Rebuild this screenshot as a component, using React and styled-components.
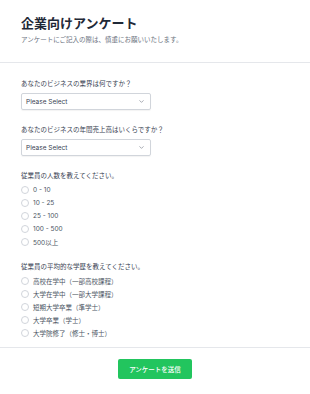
import React from "react";
import styled, { createGlobalStyle } from "styled-components";
import { ChevronDown } from "lucide-react";

const GlobalStyle = createGlobalStyle`
  body {
    margin: 0;
    background: #ffffff;
    font-family: "Inter", "Noto Sans CJK JP", sans-serif;
    color: #374151;
  }
`;

const Page = styled.div`
  width: 310px;
  min-height: 394px;
  background: #ffffff;
`;

const Header = styled.header`
  padding: 15px 21px 17px;
  border-bottom: 1px solid #e5e7eb;
`;

const Title = styled.h1`
  margin: 0;
  font-size: 13px;
  line-height: 16px;
  font-weight: 700;
  color: #1f2937;
`;

const Subtitle = styled.p`
  margin: 4px 0 0;
  font-size: 6.5px;
  line-height: 10px;
  color: #6b7280;
`;

const Form = styled.div`
  padding: 16px 21px 9px;
  display: flex;
  flex-direction: column;
  gap: 15px;
  border-bottom: 1px solid #e5e7eb;
`;

const Question = styled.div`
  display: flex;
  flex-direction: column;
  gap: 4px;
`;

const Label = styled.div`
  font-size: 6.5px;
  line-height: 10px;
  color: #374151;
`;

const SelectBox = styled.div`
  width: 130px;
  height: 17px;
  box-sizing: border-box;
  border: 1px solid #d1d5db;
  border-radius: 2px;
  box-shadow: 0 1px 1px rgba(0, 0, 0, 0.05);
  display: flex;
  align-items: center;
  justify-content: space-between;
  padding: 0 5px 0 4px;
  font-size: 6.5px;
  color: #374151;
`;

const Options = styled.div`
  display: flex;
  flex-direction: column;
  gap: 3px;
`;

const Option = styled.label`
  display: flex;
  align-items: center;
  gap: 4px;
  height: 10px;
  font-size: 6.5px;
  color: #4b5563;
`;

const Radio = styled.span`
  width: 8px;
  height: 8px;
  box-sizing: border-box;
  border: 1px solid #d1d5db;
  border-radius: 50%;
  background: #ffffff;
  flex-shrink: 0;
`;

const Footer = styled.div`
  display: flex;
  justify-content: center;
  padding: 11px 0 17px;
`;

const SubmitButton = styled.button`
  width: 74px;
  height: 20px;
  border: none;
  border-radius: 2px;
  background: #22c55e;
  color: #ffffff;
  font-family: inherit;
  font-size: 6.5px;
  font-weight: 500;
  padding: 0;
  cursor: pointer;
`;

const employees = ["0 - 10", "10 - 25", "25 - 100", "100 - 500", "500以上"];
const education = [
  "高校在学中（一部高校課程）",
  "大学在学中（一部大学課程）",
  "短期大学卒業（準学士）",
  "大学卒業（学士）",
  "大学院修了（修士・博士）",
];

const Select = () => (
  <SelectBox>
    <span>Please Select</span>
    <ChevronDown size={7} strokeWidth={2} color="#6b7280" />
  </SelectBox>
);

const RadioGroup = ({ items }) => (
  <Options>
    {items.map((item) => (
      <Option key={item}>
        <Radio />
        {item}
      </Option>
    ))}
  </Options>
);

export default function App() {
  return (
    <Page>
      <GlobalStyle />
      <Header>
        <Title>企業向けアンケート</Title>
        <Subtitle>アンケートにご記入の際は、慎重にお願いいたします。</Subtitle>
      </Header>
      <Form>
        <Question>
          <Label>あなたのビジネスの業界は何ですか？</Label>
          <Select />
        </Question>
        <Question>
          <Label>あなたのビジネスの年間売上高はいくらですか？</Label>
          <Select />
        </Question>
        <Question>
          <Label>従業員の人数を教えてください。</Label>
          <RadioGroup items={employees} />
        </Question>
        <Question>
          <Label>従業員の平均的な学歴を教えてください。</Label>
          <RadioGroup items={education} />
        </Question>
      </Form>
      <Footer>
        <SubmitButton>アンケートを送信</SubmitButton>
      </Footer>
    </Page>
  );
}
